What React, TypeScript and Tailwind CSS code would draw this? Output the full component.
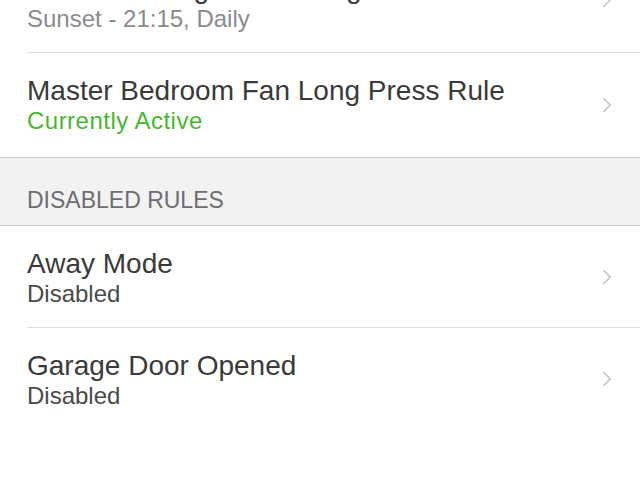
import { ChevronRight } from "lucide-react";

type Rule = {
  name: string;
  status: string;
  tone: "muted" | "active" | "disabled";
};

const activeRules: Rule[] = [
  { name: "Porch Evening Dim Setting", status: "Sunset - 21:15, Daily", tone: "muted" },
  { name: "Master Bedroom Fan Long Press Rule", status: "Currently Active", tone: "active" },
];

const disabledRules: Rule[] = [
  { name: "Away Mode", status: "Disabled", tone: "disabled" },
  { name: "Garage Door Opened", status: "Disabled", tone: "disabled" },
];

const toneClass = {
  muted: "text-[#8a8a8e]",
  active: "text-[#47b72f] tracking-[0.02em]",
  disabled: "text-[#4a4a4a]",
};

function RuleRow({
  rule,
  height,
  top,
  first,
  divider,
}: {
  rule: Rule;
  height: string;
  top: string;
  first?: boolean;
  divider?: boolean;
}) {
  return (
    <div className={`pl-[27px] ${first ? "-mt-[52px]" : ""}`}>
      <div className={`flex items-center pr-[27px] ${divider ? "border-b border-[#e0e0e3]" : ""} ${height}`}>
        <div className={`flex-1 self-start ${top}`}>
          <div className="text-[28px] leading-[32px] text-[#3a3a3a]">{rule.name}</div>
          <div className={`text-[24px] leading-[28px] ${toneClass[rule.tone]}`}>{rule.status}</div>
        </div>
        <ChevronRight className="w-[26px] h-[26px] -mr-[7px] text-[#c4c4c8]" strokeWidth={1.5} />
      </div>
    </div>
  );
}

export default function App() {
  return (
    <div
      className="w-[640px] h-[480px] overflow-hidden bg-white"
      style={{ fontFamily: '"Liberation Sans", Arial, sans-serif' }}
    >
      <RuleRow rule={activeRules[0]} height="h-[105px]" top="pt-[25px]" first divider />
      <RuleRow rule={activeRules[1]} height="h-[104px]" top="pt-[22px]" />
      <div className="h-[69px] bg-[#f2f2f2] border-y border-[#c8c7cc] pl-[27px] pt-[28px]">
        <div className="text-[23px] leading-[28px] text-[#6d6d72]">DISABLED RULES</div>
      </div>
      <RuleRow rule={disabledRules[0]} height="h-[102px]" top="pt-[22px]" divider />
      <RuleRow rule={disabledRules[1]} height="h-[102px]" top="pt-[22px]" />
    </div>
  );
}
